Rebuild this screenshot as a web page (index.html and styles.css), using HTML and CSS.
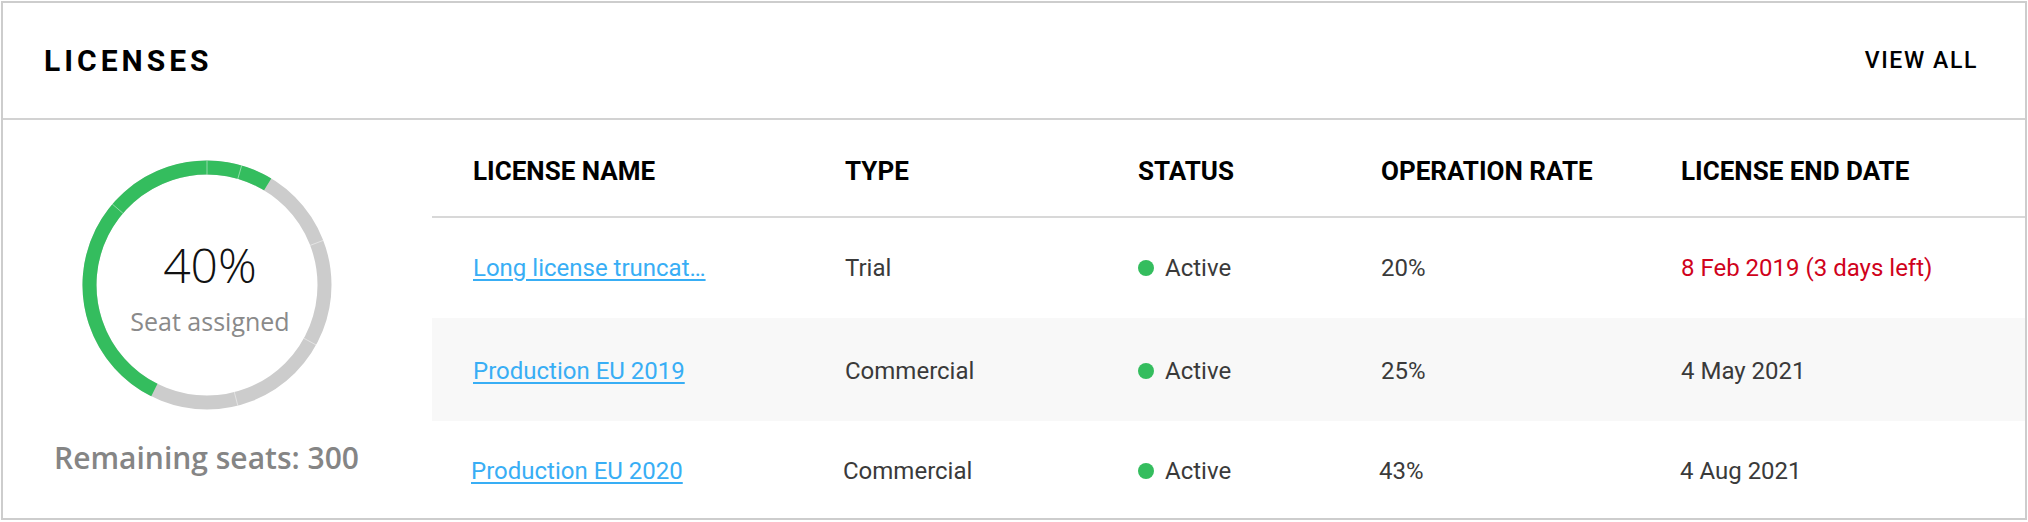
FILE: index.html
```html
<!DOCTYPE html>
<html lang="en">
<head>
<meta charset="utf-8">
<title>Licenses</title>
<link rel="stylesheet" href="styles.css">
</head>
<body>
<section class="card">
  <header class="card-header">
    <h2 class="card-title">LICENSES</h2>
    <a class="view-all" href="#">VIEW ALL</a>
  </header>
  <div class="card-body">
    <div class="summary">
      <div class="donut">
        <svg class="donut-chart" width="250" height="250" viewBox="0 0 250 250">
          <circle cx="125" cy="125" r="117.5" fill="none" stroke="#cccccc" stroke-width="14"/>
          <circle cx="125" cy="125" r="117.5" fill="none" stroke="#34bd5e" stroke-width="14"
                  stroke-dasharray="378.2 738.3" transform="rotate(116.6 125 125)"/>
          <g stroke="#ffffff" stroke-opacity="0.45" stroke-width="1">
            <line x1="125" y1="0.5" x2="125" y2="14.5"/>
            <line x1="159.7" y1="5.4" x2="155.8" y2="18.9"/>
            <line x1="30.3" y1="44.1" x2="40.9" y2="53.2"/>
            <line x1="241.2" y1="80.4" x2="228.2" y2="85.4"/>
            <line x1="234.2" y1="185" x2="221.9" y2="178.3"/>
            <line x1="155.8" y1="245.6" x2="152.3" y2="232"/>
          </g>
        </svg>
        <div class="donut-label">
          <span class="donut-value">40%</span>
          <span class="donut-caption">Seat assigned</span>
        </div>
      </div>
      <p class="remaining">Remaining seats: 300</p>
    </div>
    <div class="table-wrap">
      <table class="licenses">
        <colgroup>
          <col class="col-name">
          <col class="col-type">
          <col class="col-status">
          <col class="col-rate">
          <col class="col-date">
        </colgroup>
        <thead>
          <tr>
            <th>LICENSE NAME</th>
            <th>TYPE</th>
            <th>STATUS</th>
            <th>OPERATION RATE</th>
            <th>LICENSE END DATE</th>
          </tr>
        </thead>
        <tbody>
          <tr class="row-first">
            <td><a class="license-link" href="#">Long license truncat…</a></td>
            <td>Trial</td>
            <td><span class="status"><span class="dot"></span>Active</span></td>
            <td>20%</td>
            <td class="expiring">8 Feb 2019 (3 days left)</td>
          </tr>
          <tr class="row-alt">
            <td><a class="license-link" href="#">Production EU 2019</a></td>
            <td>Commercial</td>
            <td><span class="status"><span class="dot"></span>Active</span></td>
            <td>25%</td>
            <td>4 May 2021</td>
          </tr>
          <tr class="row-last">
            <td><a class="license-link" href="#">Production EU 2020</a></td>
            <td><span class="nudge">Commercial</span></td>
            <td><span class="status"><span class="dot"></span>Active</span></td>
            <td><span class="nudge">43%</span></td>
            <td><span class="nudge-sm">4 Aug 2021</span></td>
          </tr>
        </tbody>
      </table>
    </div>
  </div>
</section>
</body>
</html>
```

FILE: styles.css
```css
* { box-sizing: border-box; }

html, body {
  margin: 0;
  padding: 0;
  background: #ffffff;
}

body {
  font-family: Roboto, "Liberation Sans", Arial, sans-serif;
  color: #333333;
}

.card {
  margin: 1px 0 0 1px;
  width: 2026px;
  height: 519px;
  border: 2px solid #cdcdcd;
  background: #ffffff;
  display: flex;
  flex-direction: column;
  overflow: hidden;
}

.card-header {
  height: 117px;
  flex: none;
  border-bottom: 2px solid #d2d2d2;
  display: flex;
  align-items: center;
  justify-content: space-between;
  padding: 0 47px 0 41px;
}

.card-title {
  margin: 0;
  font-family: Roboto, "Liberation Sans", sans-serif;
  font-weight: 700;
  font-size: 30px;
  letter-spacing: 4px;
  color: #000000;
}

.view-all {
  font-family: Roboto, "Liberation Sans", sans-serif;
  font-weight: 500;
  font-size: 23px;
  letter-spacing: 1.6px;
  color: #000000;
  text-decoration: none;
}

.card-body {
  flex: 1;
  display: flex;
  min-height: 0;
}

.summary {
  width: 407px;
  flex: none;
  display: flex;
  flex-direction: column;
  align-items: center;
  padding-top: 40px;
}

.donut {
  display: grid;
  width: 250px;
  height: 250px;
}

.donut > * {
  grid-area: 1 / 1;
}

.donut-chart {
  display: block;
}

.donut-label {
  display: flex;
  flex-direction: column;
  align-items: center;
  padding-top: 77px;
  padding-left: 7px;
  font-family: "Open Sans", "Noto Sans", sans-serif;
}

.donut-value {
  font-size: 48px;
  font-weight: 300;
  line-height: 56px;
  color: #111111;
}

.donut-caption {
  margin-top: 12px;
  font-size: 25px;
  font-weight: 400;
  line-height: 32px;
  color: #8a8a8a;
}

.remaining {
  margin: 28px 0 0;
  font-family: "Open Sans", "Noto Sans", sans-serif;
  font-size: 30px;
  font-weight: 600;
  line-height: 40px;
  color: #858585;
}

.table-wrap {
  flex: 1;
  margin-left: 22px;
}

.licenses {
  width: 100%;
  border-collapse: separate;
  border-spacing: 0;
  table-layout: fixed;
}

.col-name { width: 413px; }
.col-type { width: 293px; }
.col-status { width: 243px; }
.col-rate { width: 300px; }

.licenses th,
.licenses td {
  box-sizing: content-box;
}

.licenses th {
  height: 90px;
  padding: 6px 0 0;
  text-align: left;
  font-size: 26px;
  font-weight: 700;
  color: #000000;
  border-bottom: 2px solid #d8d8d8;
  white-space: nowrap;
}

.licenses td {
  height: 100px;
  padding: 0;
  font-size: 24px;
  font-weight: 400;
  color: #3a3a3a;
  white-space: nowrap;
}

.licenses .row-alt td {
  height: 101px;
  padding-top: 2px;
  background: #f8f8f8;
}

.licenses .row-last td {
  height: 99px;
}

.licenses th:first-child,
.licenses td:first-child {
  padding-left: 41px;
}

.licenses .row-last td:first-child {
  padding-left: 39px;
}

.nudge { margin-left: -2px; }
.nudge-sm { margin-left: -1px; }

.license-link {
  color: #38aef5;
  text-decoration: underline;
  text-underline-offset: 3px;
}

.status {
  display: inline-flex;
  align-items: center;
}

.dot {
  width: 16px;
  height: 16px;
  border-radius: 50%;
  background: #34bd5e;
  margin-right: 11px;
}

.licenses td.expiring {
  color: #d0021b;
}
```
